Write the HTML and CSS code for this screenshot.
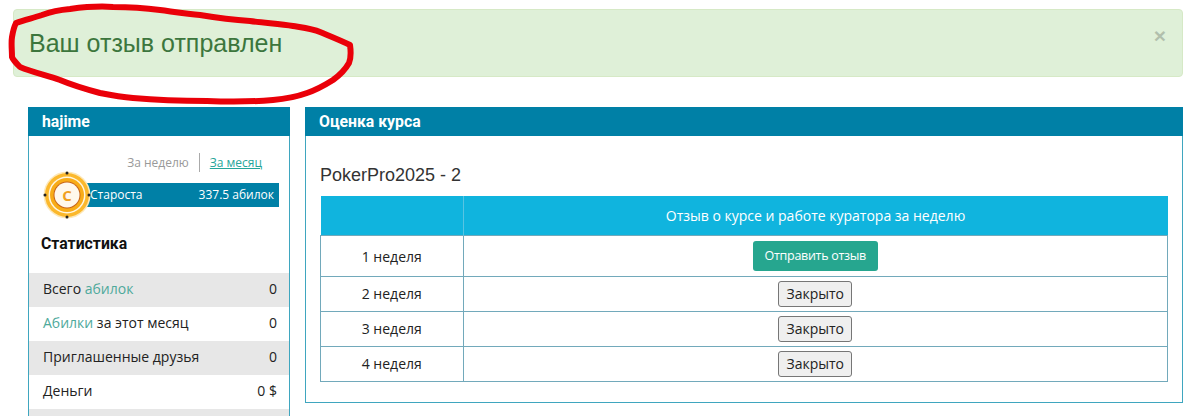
FILE: index.html
```html
<!DOCTYPE html>
<html lang="ru">
<head>
<meta charset="utf-8">
<title>Оценка курса</title>
<link rel="stylesheet" href="styles.css">
</head>
<body>
<div class="alert">
  <span>Ваш отзыв отправлен</span>
  <span class="alert-close">×</span>
</div>
<main class="layout">
  <aside class="panel side">
    <h2 class="panel-head">hajime</h2>
    <div class="tabs">
      <span class="tab-off">За неделю</span>
      <a class="tab-on" href="#">За месяц</a>
    </div>
    <div class="rank">
      <svg class="coin" width="50" height="50" viewBox="0 0 50 50" aria-hidden="true">
        <circle cx="25" cy="25" r="23.500" fill="#fde8b8"/>
        <circle cx="25" cy="25" r="22" fill="#fbb82c"/>
        <circle cx="25" cy="25" r="18.500" fill="#fff6e0"/>
        <circle cx="25" cy="25" r="17" fill="#f8ac17"/>
        <circle cx="25" cy="25" r="13.500" fill="#c9651a"/>
        <circle cx="25" cy="25" r="12.500" fill="#fff8ec"/>
        <text class="coin-letter" x="25" y="30.500" text-anchor="middle">C</text>
        <circle cx="25" cy="3" r="1.500" fill="#222"/>
        <circle cx="25" cy="47" r="1.500" fill="#222"/>
        <circle cx="3" cy="25" r="1.500" fill="#222"/>
        <circle cx="47" cy="25" r="1.500" fill="#222"/>
      </svg>
      <div class="rank-bar"><span>Староста</span><span>337.5 абилок</span></div>
    </div>
    <h3 class="stats-title">Статистика</h3>
    <ul class="stats">
      <li><span>Всего <a href="#">абилок</a></span><span>0</span></li>
      <li><span><a href="#">Абилки</a> за этот месяц</span><span>0</span></li>
      <li><span>Приглашенные друзья</span><span>0</span></li>
      <li><span>Деньги</span><span>0 $</span></li>
      <li></li>
    </ul>
  </aside>
  <section class="panel content">
    <h2 class="panel-head">Оценка курса</h2>
    <div class="content-body">
      <h3 class="course">PokerPro2025 - 2</h3>
      <table class="weeks">
        <thead>
          <tr><th class="col-week"></th><th>Отзыв о курсе и работе куратора за неделю</th></tr>
        </thead>
        <tbody>
          <tr class="first"><td>1 неделя</td><td><a class="btn-send" href="#">Отправить отзыв</a></td></tr>
          <tr><td>2 неделя</td><td><button class="btn-closed" type="button">Закрыто</button></td></tr>
          <tr><td>3 неделя</td><td><button class="btn-closed" type="button">Закрыто</button></td></tr>
          <tr><td>4 неделя</td><td><button class="btn-closed" type="button">Закрыто</button></td></tr>
        </tbody>
      </table>
    </div>
  </section>
</main>
<svg class="scribble" width="360" height="110" viewBox="0 0 360 110" aria-hidden="true">
  <path d="M16 23C24 20 33 18 42 15C50 12 58 10 70 9C85 7 100 6 113 7C130 7 145 8 160 10C175 12 188 14 200 15C218 18 235 20 250 21C265 23 280 24 293 26C305 28 313 29 320 32C332 37 342 41 350 45C351 52 351 58 349 63C345 70 340 75 333 80C325 85 316 90 307 93C296 97 285 99 273 100C250 102 230 102 207 101C180 101 155 100 133 98C120 97 110 95 100 93C85 89 72 85 60 80C45 75 32 72 20 67C16 63 13 60 12 57C12 50 11 43 12 37C13 31 14 27 16 23Z" fill="none" stroke="#ea0009" stroke-width="6" stroke-linejoin="round"/>
</svg>
</body>
</html>
```
FILE: styles.css
```css
html, body {
  margin: 0;
  height: 416px;
  overflow: hidden;
  background: #fff;
}
body {
  position: relative;
  font-family: "Open Sans", "Liberation Sans", sans-serif;
  font-size: 13px;
  color: #222;
}
.alert {
  display: flex;
  justify-content: space-between;
  margin: 9px 7px 30px 13px;
  height: 68px;
  box-sizing: border-box;
  padding: 17px 16px 0 15px;
  background: #dff0d8;
  border: 1px solid #d6e9c6;
  border-radius: 4px;
  color: #3c763d;
  font-family: "Liberation Sans", Arial, sans-serif;
  font-size: 25px;
  line-height: 32px;
}
.alert-close {
  font-size: 21px;
  font-weight: 700;
  line-height: 17px;
  color: #000;
  opacity: .2;
}
.layout {
  display: flex;
  align-items: flex-start;
  gap: 15px;
  margin: 0 7px 0 28px;
}
.panel {
  box-sizing: border-box;
  border: 1px solid #3fa6bf;
  border-top: 0;
}
.side { flex: 0 0 262px; }
.content { flex: 1; height: 296px; }
.panel-head {
  margin: 0 -1px;
  height: 29px;
  padding-left: 14px;
  background: #0080a6;
  color: #fff;
  font-family: Roboto, "Open Sans", sans-serif;
  font-size: 15.800px;
  font-weight: 700;
  line-height: 29px;
}
.tabs {
  display: flex;
  justify-content: flex-end;
  align-items: center;
  height: 19px;
  margin: 17px 27px 0 0;
  font-size: 12px;
}
.tab-off {
  color: #999;
  padding-right: 10px;
  border-right: 1px solid #aaa;
  line-height: 19px;
}
.tab-on {
  color: #26a69a;
  margin-left: 10px;
  text-decoration: underline;
}
.rank {
  position: relative;
  margin: 11px 10px 0 31px;
  height: 24px;
}
.rank-bar {
  display: flex;
  justify-content: space-between;
  height: 24px;
  padding: 0 5px 0 30px;
  background: #0080a6;
  color: #fff;
  font-size: 12px;
  line-height: 24px;
}
.coin {
  position: absolute;
  left: -18px;
  top: -13px;
}
.coin-letter {
  font-family: "Open Sans", sans-serif;
  font-size: 15px;
  font-weight: 700;
  fill: #f0a020;
}
.stats-title {
  margin: 27px 0 0 12px;
  height: 20px;
  font-family: Roboto, "Open Sans", sans-serif;
  font-size: 15.800px;
  font-weight: 700;
  line-height: 20px;
  color: #111;
}
.stats {
  list-style: none;
  margin: 19px 0 0;
  padding: 0;
}
.stats li {
  display: flex;
  justify-content: space-between;
  height: 34px;
  box-sizing: border-box;
  padding: 0 12px 0 14px;
  font-size: 14px;
  line-height: 32px;
}
.stats li:nth-child(odd) { background: #e7e7e7; }
.stats a { color: #4ea99b; text-decoration: none; }
.content-body { padding: 28px 14px 0; }
.course {
  margin: 0 0 10px;
  font-family: "Liberation Sans", Arial, sans-serif;
  font-size: 18px;
  font-weight: 400;
  line-height: 22px;
  color: #333;
}
.weeks {
  width: 848px;
  border-collapse: collapse;
  table-layout: fixed;
  font-size: 14px;
}
.col-week { width: 142px; }
.weeks th {
  height: 39px;
  padding: 0;
  background: #10b4de;
  color: #fff;
  font-weight: 400;
  border-left: 1px solid #58c4e2;
}
.weeks th:first-child { border-left: 0; }
.weeks td {
  height: 34px;
  padding: 0;
  text-align: center;
  border: 1px solid #72a9bb;
}
.weeks tr:not(.first) td:first-child {
  vertical-align: top;
  line-height: 33px;
}
.weeks .first td { height: 40px; }
.btn-send {
  display: inline-block;
  box-sizing: border-box;
  width: 125px;
  height: 30px;
  background: #26a68f;
  border-radius: 3px;
  color: #fff;
  font-size: 12.500px;
  line-height: 29px;
  letter-spacing: -.3px;
  text-decoration: none;
  vertical-align: middle;
}
.btn-closed {
  box-sizing: border-box;
  width: 74px;
  height: 26px;
  padding: 0;
  background: #efefef;
  border: 1px solid #767676;
  border-radius: 3px;
  color: #222;
  font-family: "Open Sans", sans-serif;
  font-size: 14px;
  line-height: 22px;
  vertical-align: middle;
}
.scribble {
  position: absolute;
  left: 0;
  top: 0;
  pointer-events: none;
}
```
